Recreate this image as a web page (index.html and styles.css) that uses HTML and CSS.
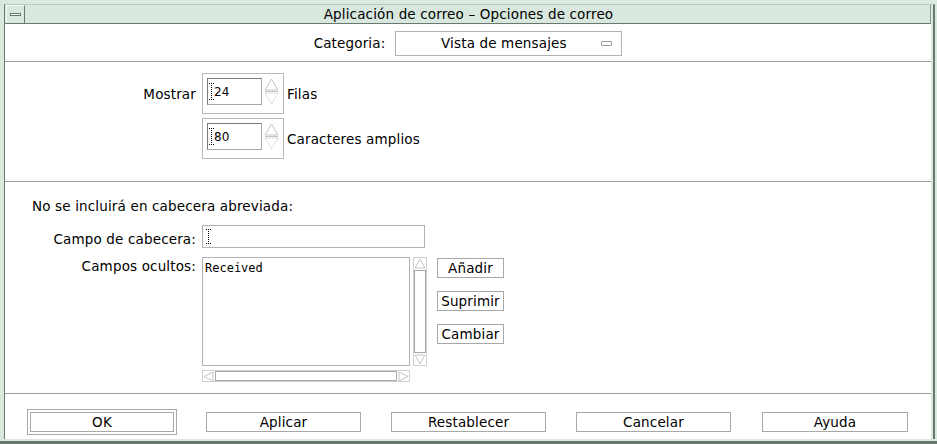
FILE: index.html
```html
<!DOCTYPE html>
<html lang="es">
<head>
<meta charset="utf-8">
<title>Opciones de correo</title>
<link rel="stylesheet" href="styles.css">
</head>
<body>
<div class="frame">
  <div class="win">
    <div class="titlebar">
      <div class="menubtn"><span class="menubar"></span></div>
      <div class="title">Aplicación de correo – Opciones de correo</div>
    </div>
    <div class="content">
      <section class="sec sec-cat">
        <span class="lbl">Categoria:</span>
        <div class="dropdown">
          <span class="dd-text">Vista de mensajes</span>
          <span class="dd-glyph"></span>
        </div>
      </section>

      <section class="sec sec-disp">
        <div class="disp-grid">
          <span class="lbl lbl-right">Mostrar</span>
          <div class="spinbox">
            <div class="numfield"><svg class="ibeam" width="5" height="17" viewBox="0 0 5 17"><path d="M0 0.5h5M0 16.5h5M2.5 0v17" stroke="#000" stroke-width="1" stroke-dasharray="1 1" fill="none"/></svg><span class="num">24</span></div>
            <svg class="arrows" width="15" height="27" viewBox="0 0 15 27"><path d="M7.5 1L14 12H1Z" fill="#fff" stroke="#c4c4c4"/><path d="M1 13.5h13" stroke="#c4c4c4"/><path d="M7.5 26L14 15H1Z" fill="#fff" stroke="#c4c4c4" stroke-dasharray="1 1"/></svg>
          </div>
          <span class="lbl">Filas</span>

          <span></span>
          <div class="spinbox">
            <div class="numfield"><svg class="ibeam" width="5" height="17" viewBox="0 0 5 17"><path d="M0 0.5h5M0 16.5h5M2.5 0v17" stroke="#000" stroke-width="1" stroke-dasharray="1 1" fill="none"/></svg><span class="num">80</span></div>
            <svg class="arrows" width="15" height="27" viewBox="0 0 15 27"><path d="M7.5 1L14 12H1Z" fill="#fff" stroke="#c4c4c4"/><path d="M1 13.5h13" stroke="#c4c4c4"/><path d="M7.5 26L14 15H1Z" fill="#fff" stroke="#c4c4c4" stroke-dasharray="1 1"/></svg>
          </div>
          <span class="lbl">Caracteres amplios</span>
        </div>
      </section>

      <section class="sec sec-hdr">
        <div class="hdr-title">No se incluirá en cabecera abreviada:</div>
        <div class="hdr-grid">
          <span class="lbl lbl-right lbl-field">Campo de cabecera:</span>
          <div class="textfield"><svg class="ibeam" width="5" height="15" viewBox="0 0 5 15"><path d="M0 0.5h5M0 14.5h5M2.5 0v15" stroke="#000" stroke-width="1" stroke-dasharray="1 1" fill="none"/></svg></div>

          <span class="lbl lbl-right lbl-list">Campos ocultos:</span>
          <div class="list-area">
            <div class="list-row">
              <div class="listbox"><span class="mono">Received</span></div>
              <div class="vscroll">
                <svg class="sb-arrow" width="12" height="11" viewBox="0 0 12 11"><path d="M6 1L11 10H1Z" fill="#fff" stroke="#c4c4c4"/></svg>
                <div class="vtrack"></div>
                <svg class="sb-arrow" width="12" height="11" viewBox="0 0 12 11"><path d="M6 10L11 1H1Z" fill="#fff" stroke="#c4c4c4"/></svg>
              </div>
              <div class="side-btns">
                <button class="btn btn-small">Añadir</button>
                <button class="btn btn-small">Suprimir</button>
                <button class="btn btn-small">Cambiar</button>
              </div>
            </div>
            <div class="hscroll">
              <svg class="sb-arrow" width="11" height="11" viewBox="0 0 11 11"><path d="M1 5.5L10 1V10Z" fill="#fff" stroke="#c4c4c4"/></svg>
              <div class="htrack"></div>
              <svg class="sb-arrow" width="11" height="11" viewBox="0 0 11 11"><path d="M10 5.5L1 1V10Z" fill="#fff" stroke="#c4c4c4"/></svg>
            </div>
          </div>
        </div>
      </section>

      <section class="sec sec-btns">
        <div class="default-ring"><button class="btn btn-big btn-ok">OK</button></div>
        <button class="btn btn-big">Aplicar</button>
        <button class="btn btn-big">Restablecer</button>
        <button class="btn btn-big">Cancelar</button>
        <button class="btn btn-big btn-help">Ayuda</button>
      </section>
    </div>
  </div>
</div>
</body>
</html>
```

FILE: styles.css
```css
* { box-sizing: border-box; }
html, body { margin: 0; padding: 0; background: #dbe8de; }
body {
  font-family: "DejaVu Sans", "Liberation Sans", sans-serif;
  font-size: 13.5px;
  letter-spacing: 0.15px;
  color: #000;
}
.frame {
  width: 937px;
  height: 444px;
  background: #dbe8de;
  padding: 4px 2px 2px 4px;
  border-bottom: 3px solid #6b7870;
}
.win {
  height: 100%;
  display: flex;
  flex-direction: column;
  border-left: 1px solid #6b7870;
  border-top: 1px solid #b9c9bd;
  border-right: 2px solid #6b7870;
  padding-right: 2px;
  background: #dbe8de;
}
.titlebar {
  height: 19px;
  flex: none;
  display: flex;
  background: #d9e8de;
  border-bottom: 1px solid #6b7870;
  border-right: 1px solid #8d9a92;
}
.menubtn {
  width: 19px;
  margin-left: 1px;
  border-left: 1px solid #f4faf6;
  border-top: 1px solid #f4faf6;
  border-right: 1px solid #6b7870;
  display: flex;
  align-items: center;
  justify-content: center;
}
.menubar {
  display: block;
  width: 11px;
  height: 3px;
  border: 1px solid #6b7870;
  background: #f4faf6;
}
.title {
  flex: 1;
  text-align: center;
  line-height: 18px;
  padding-right: 18px;
}
.content {
  flex: 1;
  background: #fff;
  display: flex;
  flex-direction: column;
}
.sec { border-bottom: 1px solid #9c9c9c; }
.sec-cat {
  height: 38px;
  display: flex;
  align-items: center;
  justify-content: center;
  gap: 10px;
  padding-top: 1px;
}
.dropdown {
  width: 227px;
  height: 25px;
  border: 1px solid #b3b3b3;
  display: flex;
  align-items: center;
  padding: 0 9px 0 0;
}
.dd-text { flex: 1; text-align: center; padding-left: 10px; }
.dd-glyph {
  width: 11px;
  height: 5px;
  border: 1px solid #9a9a9a;
  border-radius: 1px;
}
.sec-disp {
  height: 120px;
  padding-top: 11px;
}
.disp-grid {
  display: grid;
  grid-template-columns: 191px 82px auto;
  column-gap: 6px;
  row-gap: 4px;
  align-items: center;
}
.disp-grid .lbl:nth-child(3n) { margin-left: -3px; }
.lbl-right { text-align: right; }
.spinbox {
  height: 41px;
  border: 1px solid #b8b8b8;
  padding: 4px 4px 8px 4px;
  display: flex;
  gap: 2px;
}
.numfield {
  width: 55px;
  height: 27px;
  border: 1px solid #a8a8a8;
  border-top-color: #7a7a7a;
  border-left-color: #7a7a7a;
  display: flex;
  align-items: center;
  padding-left: 1px;
}
.ibeam { display: block; flex: none; }
.num { font-family: "DejaVu Sans", sans-serif; font-size: 12px; letter-spacing: 0; }
.arrows { display: block; flex: none; }
.sec-hdr {
  height: 212px;
  padding: 16px 0 0 27px;
}
.hdr-title { line-height: 16px; }
.hdr-grid {
  margin-top: 11px;
  margin-left: -27px;
  display: grid;
  grid-template-columns: 191px auto;
  column-gap: 6px;
  row-gap: 9px;
}
.lbl-field { padding-top: 6px; }
.lbl-list { padding-top: 1px; }
.textfield {
  width: 223px;
  height: 23px;
  border: 1px solid #b3b3b3;
  display: flex;
  align-items: center;
  padding-left: 3px;
}
.list-area { display: flex; flex-direction: column; gap: 4px; }
.list-row { display: flex; }
.listbox {
  width: 208px;
  height: 109px;
  border: 1px solid #b3b3b3;
  padding: 1px 2px;
}
.mono {
  font-family: "DejaVu Sans Mono", "Liberation Mono", monospace;
  font-size: 12px;
  letter-spacing: 0;
  line-height: 16px;
}
.vscroll {
  width: 14px;
  height: 109px;
  margin-left: 3px;
  border: 1px solid #cfcfcf;
  display: flex;
  flex-direction: column;
  align-items: center;
}
.sb-arrow { display: block; flex: none; }
.vtrack {
  flex: 1;
  width: 12px;
  margin: 1px 0;
  border: 1px solid #a8a8a8;
}
.hscroll {
  width: 208px;
  height: 12px;
  border: 1px solid #cfcfcf;
  display: flex;
  align-items: center;
}
.htrack {
  flex: 1;
  height: 10px;
  margin: 0 1px;
  border: 1px solid #a8a8a8;
}
.side-btns {
  margin-left: 10px;
  margin-top: 1px;
  display: flex;
  flex-direction: column;
  gap: 13px;
}
.btn {
  font-family: "DejaVu Sans", "Liberation Sans", sans-serif;
  font-size: 13.5px;
  letter-spacing: 0.15px;
  color: #000;
  background: #fff;
  border: 1px solid #a8a8a8;
  padding: 0;
  margin: 0;
}
.btn-small { width: 67px; height: 20px; }
.sec-btns {
  flex: 1;
  border-bottom: none;
  display: flex;
  align-items: flex-start;
  padding: 15px 0 0 22px;
  gap: 30px;
}
.default-ring {
  width: 150px;
  height: 26px;
  border: 1px solid #a8a8a8;
  padding: 2px;
  margin-right: -1px;
}
.btn-big { width: 155px; height: 20px; margin-top: 3px; }
.btn-ok { width: 144px; margin-top: 0; }
.btn-help { width: 146px; margin-left: 1px; }
```
